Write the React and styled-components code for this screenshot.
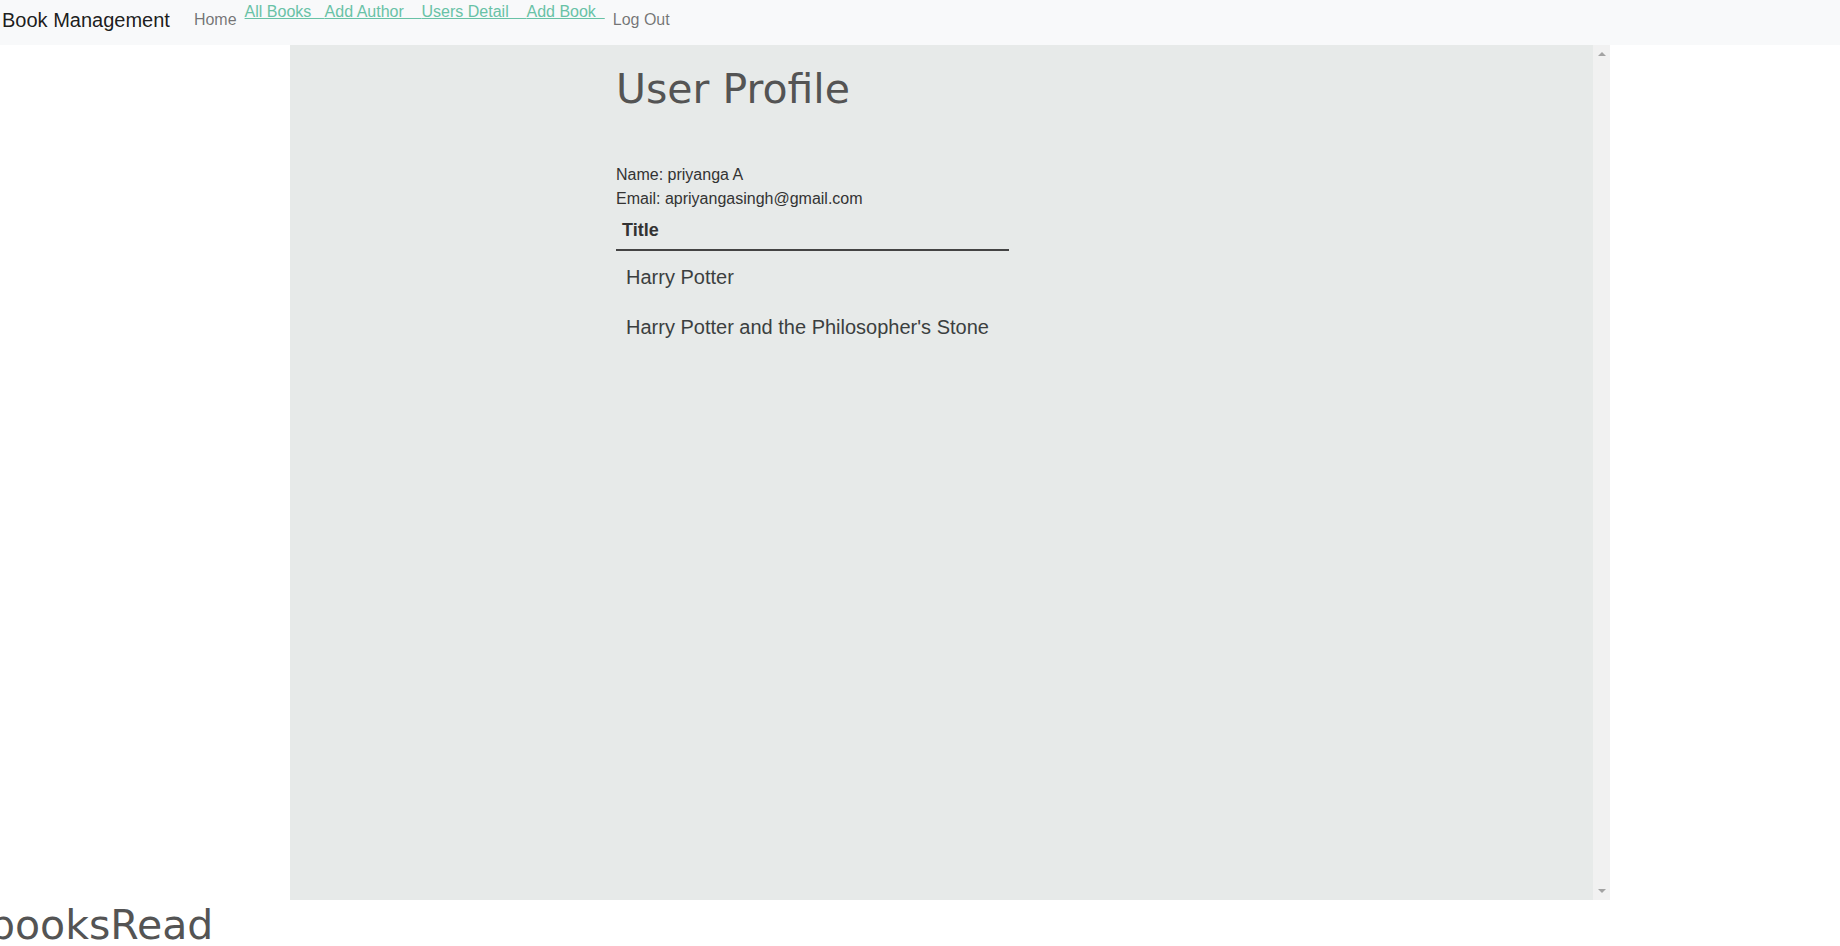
import React from 'react'
import styled, { createGlobalStyle } from "styled-components"

const GlobalStyle = createGlobalStyle`
body{
    margin:0;
    background:#fff;
    font-family:"Liberation Sans", Arial, sans-serif;
    overflow:hidden;
}
`;

const links = [
    { label: "All Books", pad: "   " },
    { label: "Add Author", pad: "    " },
    { label: "Users Detail", pad: "    " },
    { label: "Add Book", pad: "  " },
];

const books = ["Harry Potter", "Harry Potter and the Philosopher's Stone"];

export default function App() {
    return (
        <>
            <GlobalStyle />
            <Navbar>
                <Brand>Book Management</Brand>
                <NavLink>Home</NavLink>
                <LinkGroup>
                    {links.map((l) => (
                        <TealLink key={l.label}>{l.label + l.pad}</TealLink>
                    ))}
                </LinkGroup>
                <NavLink>Log Out</NavLink>
            </Navbar>
            <Frame>
                <FrameBody>
                    <Profile>
                        <Heading>User Profile</Heading>
                        <Info>Name: priyanga A</Info>
                        <Info>Email: apriyangasingh@gmail.com</Info>
                        <Table>
                            <thead>
                                <tr>
                                    <Th>Title</Th>
                                </tr>
                            </thead>
                            <tbody>
                                {books.map((b) => (
                                    <tr key={b}>
                                        <Td>{b}</Td>
                                    </tr>
                                ))}
                            </tbody>
                        </Table>
                    </Profile>
                </FrameBody>
                <Scrollbar>
                    <Arrow />
                    <Arrow $down />
                </Scrollbar>
            </Frame>
            <BooksRead>booksRead</BooksRead>
        </>
    )
}

const Navbar=styled.nav`
display:flex;
align-items:flex-start;
height:45px;
background-color:#f8f9fa;
`;
const Brand=styled.div`
font-size:20px;
line-height:30px;
padding:5px 0 5px 2px;
margin-right:16px;
color:rgba(0,0,0,0.9);
white-space:nowrap;
`;
const NavLink=styled.div`
font-size:16px;
line-height:24px;
padding:8px;
color:rgba(0,0,0,0.55);
white-space:nowrap;
`;
const LinkGroup=styled.div`
display:flex;
`;
const TealLink=styled.a`
font-size:16px;
line-height:24px;
color:#68c2a6;
text-decoration:underline;
white-space:pre;
cursor:pointer;
`;
const Frame=styled.div`
display:flex;
width:1320px;
height:855px;
margin-left:290px;
`;
const FrameBody=styled.div`
flex:1;
background-color:#e7eae9;
overflow:hidden;
`;
const Profile=styled.div`
padding:19px 0 0 326px;
color:#333;
`;
const Heading=styled.h1`
margin:0 0 49px;
font-family:"DejaVu Sans", sans-serif;
font-weight:400;
font-size:41px;
line-height:50px;
color:#545454;
`;
const Info=styled.div`
font-size:16px;
line-height:24px;
color:#333;
`;
const Table=styled.table`
width:393px;
border-collapse:collapse;
`;
const Th=styled.th`
text-align:left;
font-size:18px;
line-height:27px;
padding:6px 6px 5px;
color:#333;
border-bottom:2px solid #444;
`;
const Td=styled.td`
font-size:20px;
line-height:30px;
padding:11px 10px 9px;
color:#3b3f3f;
`;
const Scrollbar=styled.div`
width:17px;
background-color:#f1f1f1;
display:flex;
flex-direction:column;
justify-content:space-between;
align-items:center;
padding:7px 0;
box-sizing:border-box;
`;
const Arrow=styled.div`
width:0;
height:0;
border-left:4px solid transparent;
border-right:4px solid transparent;
${(p) => p.$down ? "border-top:4px solid #a3a3a3;" : "border-bottom:4px solid #a3a3a3;"}
`;
const BooksRead=styled.h2`
margin:5px 0 0 -11px;
font-family:"DejaVu Sans", sans-serif;
font-weight:400;
font-size:41px;
line-height:40px;
color:#545454;
white-space:nowrap;
`;
